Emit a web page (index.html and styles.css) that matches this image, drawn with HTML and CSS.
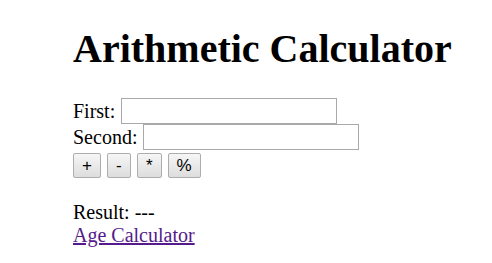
FILE: index.html
```html
<!DOCTYPE html>
<html>
<head>
<meta charset="utf-8">
<title>Arithmetic Calculator</title>
<link rel="stylesheet" href="styles.css">
</head>
<body>
<div class="page">
  <h1 class="title">Arithmetic Calculator</h1>
  <div class="row"><label>First:</label> <input class="field" type="text"></div>
  <div class="row"><label>Second:</label> <input class="field" type="text"></div>
  <div class="row buttons">
    <button class="btn">+</button>
    <button class="btn">-</button>
    <button class="btn">*</button>
    <button class="btn">%</button>
  </div>
  <p class="result">Result: ---</p>
  <a class="link" href="#">Age Calculator</a>
</div>
</body>
</html>
```
FILE: styles.css
```css
html, body {
  margin: 0;
  background: #ffffff;
}
body {
  font-family: "Liberation Serif", "Times New Roman", serif;
  font-size: 20px;
  color: #000;
}
.page {
  padding: 26px 0 0 73px;
}
.title {
  font-size: 40px;
  font-weight: bold;
  margin: 0 0 27px 0;
  line-height: 45px;
}
.row {
  display: flex;
  align-items: center;
  height: 26px;
  line-height: 23px;
}
.row label {
  margin-right: 6px;
}
.field {
  box-sizing: border-box;
  width: 216px;
  height: 26px;
  border: 1px solid #a9a9a9;
  background: #fff;
  margin: 0;
  padding: 0 2px;
  font-size: 17px;
}
.buttons {
  margin-top: 3px;
  gap: 6px;
  height: 25px;
}
.btn {
  box-sizing: border-box;
  height: 25px;
  min-width: 24px;
  padding: 0 8px;
  margin: 0;
  border: 1px solid #adadad;
  border-radius: 2px;
  background: linear-gradient(#f6f6f6, #dddddd);
  font-family: "Liberation Sans", Arial, sans-serif;
  font-size: 17px;
  color: #000;
}
.result {
  margin: 23px 0 0 0;
  line-height: 23px;
}
.link {
  display: block;
  color: #551a8b;
  text-decoration: underline;
  line-height: 23px;
}
```
